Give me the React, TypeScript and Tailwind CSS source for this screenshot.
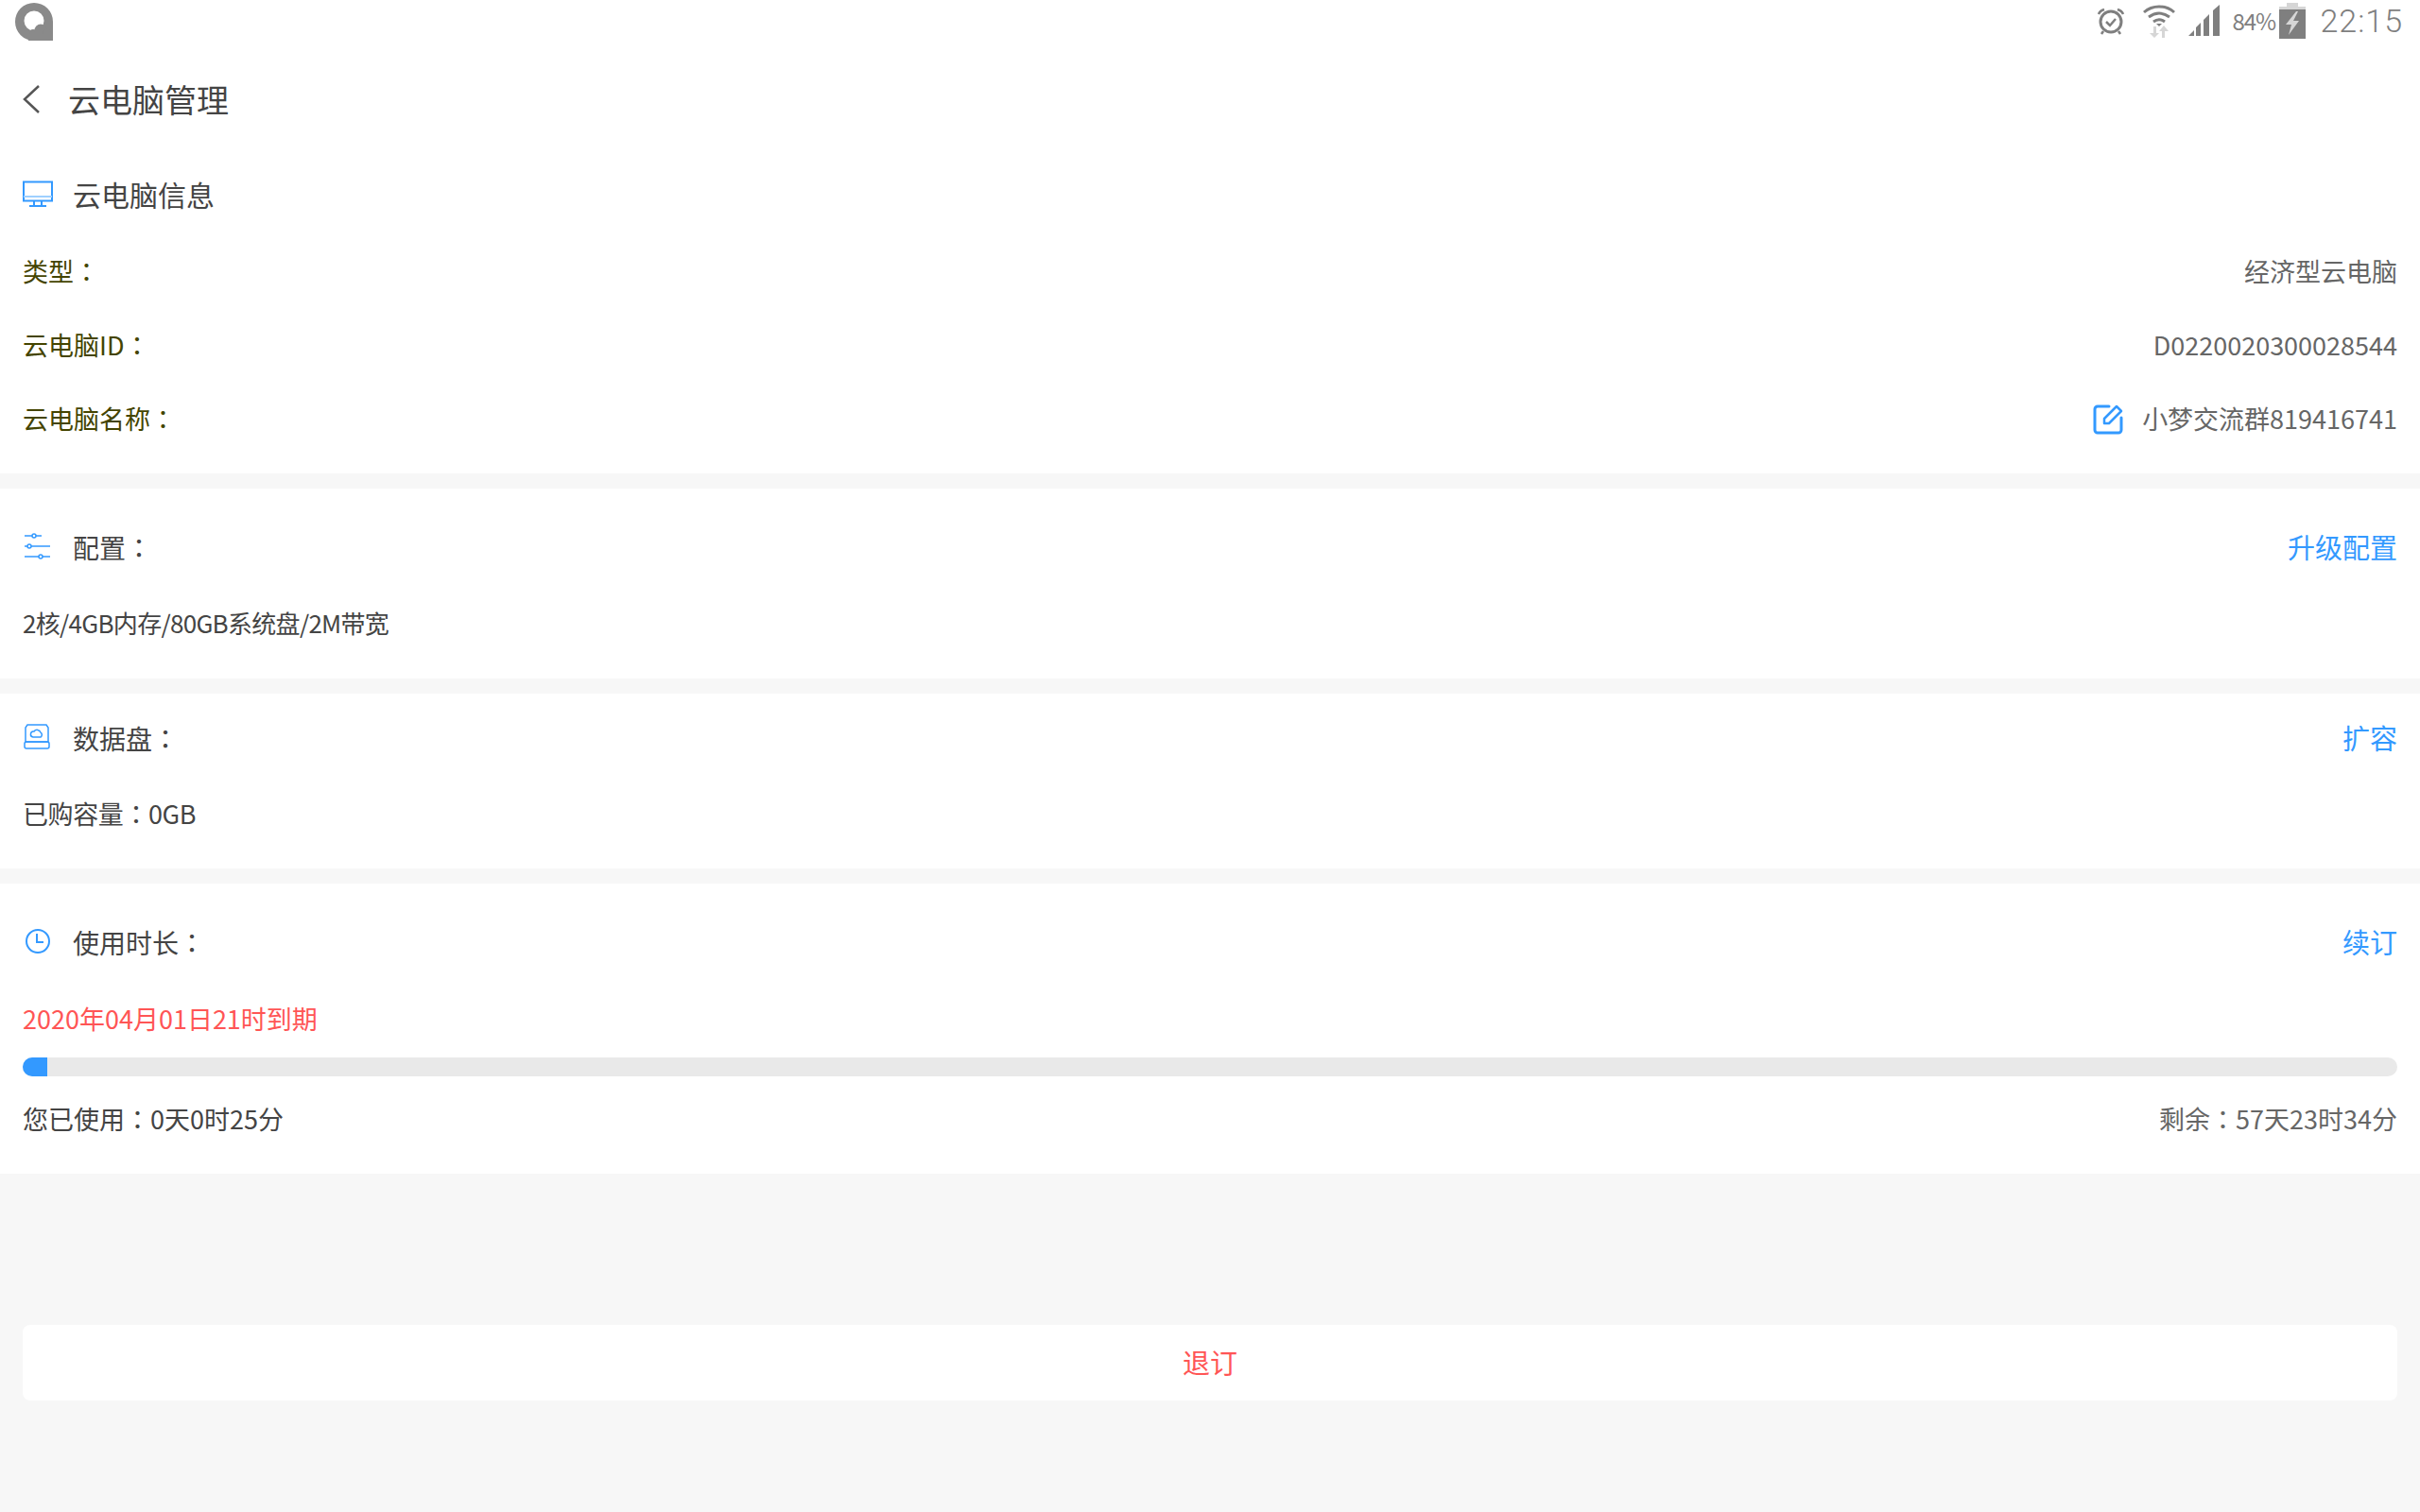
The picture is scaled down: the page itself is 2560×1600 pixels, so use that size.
import type {ReactNode} from "react";

const font = "font-['Noto_Sans_CJK_SC','Noto_Sans',sans-serif]";

// the TC cut centres the full width colon, as the reference does
function Colon() {
    return <span className="font-['Noto_Sans_CJK_TC',sans-serif]">：</span>;
}

function BlueIcon({children}: {children: ReactNode}) {
    return (
        <svg className="w-8 h-8 shrink-0" viewBox="0 0 32 32" fill="none" stroke="#3399ff" strokeWidth={2}>
            {children}
        </svg>
    );
}

function SectionHead({icon, title, action}: {icon: ReactNode, title: string, action?: string}) {
    return (
        <div className="flex items-center justify-between h-8">
            <div className="flex items-center gap-[21px]">
                {icon}
                <span className="text-[28px] text-[#444444]">{title}<Colon/></span>
            </div>
            {action && <span className="text-[29px] text-[#3399ff]">{action}</span>}
        </div>
    );
}

function StatusBar() {
    return (
        <div className="h-12 flex items-start justify-between pl-4 pr-[18px] pt-0.5">
            <svg className="w-10 h-10 mt-px" viewBox="0 0 40 40" fill="#8a8a8a">
                <path fillRule="evenodd"
                      d="M20 0a20 20 0 0 0 0 40h18a2 2 0 0 0 2-2V20A20 20 0 0 0 20 0Zm0 8.500a10.500 10.500 0 1 1 0 21 10.500 10.500 0 0 1 0-21Z"/>
                <circle cx="19" cy="32" r="4"/>
                <circle cx="27" cy="29" r="6.500"/>
                <circle cx="34" cy="33" r="5"/>
                <path d="M14 33h26v7H14Z"/>
            </svg>
            <div className="flex items-center h-10 text-[#7f7f7f]">
                <svg className="w-[30px] h-[30px] mr-[19px]" viewBox="0 0 30 30" fill="none" stroke="#7f7f7f"
                     strokeWidth={3}>
                    <circle cx="15" cy="16" r="11"/>
                    <path d="m10 16 4 4 6-7M2 8c1-3 3-4 6-5M28 8c-1-3-3-4-6-5M7 26l-2 3M23 26l2 3" strokeWidth={2.500}/>
                </svg>
                <svg className="w-[34px] h-[36px] mr-[14px]" viewBox="0 0 34 36">
                    <path d="M1 9C10 1 24 1 33 9M6 14c7-5 15-5 22 0M11 19c4-3 8-3 12 0" fill="none" stroke="#7f7f7f"
                          strokeWidth={3}/>
                    <path d="M17 24l-3-3h6Z" fill="#7f7f7f"/>
                    <path d="M11 24v7h-4l5 5 5-5h-3v-7ZM23 36v-7h4l-5-6-5 6h3v7Z" fill="#d6d6d6"/>
                </svg>
                <svg className="w-[34px] h-[34px] mr-[12px]" viewBox="0 0 34 34" fill="#7f7f7f">
                    <path d="M0 33 6 27v6ZM8 33V24l5-5v14ZM16 33V16l6-6v23ZM26 33V6l7-6v33Z"/>
                </svg>
                <span className="text-[24px] leading-none w-[48px] mr-[2px] tracking-[-1px]">84%</span>
                <svg className="w-7 h-[38px] mr-[15px]" viewBox="0 0 28 38">
                    <path d="M0 7h28v31H0Z" fill="#7f7f7f"/>
                    <path d="M8 0h12v4h8v3H0V4h8Z" fill="#d6d6d6"/>
                    <path d="M18 9 7 23h6l-3 11 11-15h-6l5-10Z" fill="#d6d6d6"/>
                </svg>
                <span className="font-['Roboto',sans-serif] text-[34px] leading-none tracking-[1px] font-light">22:15</span>
            </div>
        </div>
    );
}

function InfoRow({label, children}: {label: string, children: ReactNode}) {
    return (
        <div className="flex items-center justify-between h-[78px] pt-[3px] text-[27px]">
            <span className="text-[#444400]">{label}<Colon/></span>
            {children}
        </div>
    );
}

export default function App() {
    return (
        <div className={`w-[2560px] h-[1600px] overflow-hidden flex flex-col bg-[#f7f7f7] ${font}`}>
            <div className="bg-white">
                <StatusBar/>

                {/* Title */}
                <div className="flex items-center h-[114px] pl-6 gap-7">
                    <svg className="w-5 h-8 shrink-0" viewBox="0 0 20 32" fill="none" stroke="#555555"
                         strokeWidth={2.500}>
                        <path d="M17 2 2 16l15 14"/>
                    </svg>
                    <span className="text-[34px] pb-[2px] text-[#444444]">云电脑管理</span>
                </div>

                {/* Info */}
                <div className="px-6 pt-[29px] pb-5">
                    <div className="flex items-center gap-[21px] h-8 mb-6">
                        <svg className="w-8 h-8 shrink-0" viewBox="0 0 32 32" fill="none" stroke="#3399ff"
                             strokeWidth={2}>
                            <path d="M1 1.500h30v20H1Z"/>
                            <path d="M1 17h30" stroke="#9fd0ff"/>
                            <path d="M12 22v4M20 22v4M7 27h18"/>
                        </svg>
                        <span className="text-[30px] pb-[3px] text-[#444444]">云电脑信息</span>
                    </div>
                    <InfoRow label="类型">
                        <span className="text-[#666666]">经济型云电脑</span>
                    </InfoRow>
                    <InfoRow label="云电脑ID">
                        <span className="text-[#666666]">D0220020300028544</span>
                    </InfoRow>
                    <InfoRow label="云电脑名称">
                        <div className="flex items-center gap-5">
                            <svg className="w-8 h-8" viewBox="0 0 32 32" fill="none" stroke="#3399ff" strokeWidth={3}
                                 strokeLinecap="round" strokeLinejoin="round">
                                <path d="M17 2H5a3 3 0 0 0-3 3v22a3 3 0 0 0 3 3h22a3 3 0 0 0 3-3V14"/>
                                <path d="M12 20v-5L25 2l5 5-13 13Z" strokeWidth={2.500}/>
                            </svg>
                            <span className="text-[#666666]">小梦交流群819416741</span>
                        </div>
                    </InfoRow>
                </div>
            </div>

            {/* Config */}
            <div className="bg-white mt-4 px-6 pt-[46px] h-[201px]">
                <SectionHead
                    title="配置"
                    action="升级配置"
                    icon={
                        <BlueIcon>
                            <g strokeWidth={1.500}>
                                <path d="M2 4h8M14 4h6M2 15h3M9 15h20M2 26h15M21 26h8"/>
                                <circle cx="12" cy="4" r="2"/>
                                <circle cx="7" cy="15" r="2"/>
                                <circle cx="19" cy="26" r="2"/>
                            </g>
                        </BlueIcon>
                    }
                />
                <div className="mt-[48px] text-[26px] tracking-[-0.7px] text-[#444444] leading-8">2核/4GB内存/80GB系统盘/2M带宽</div>
            </div>

            {/* Data disk */}
            <div className="bg-white mt-4 px-6 pt-[31px] h-[185px]">
                <SectionHead
                    title="数据盘"
                    action="扩容"
                    icon={
                        <BlueIcon>
                            <g strokeWidth={1.500}>
                                <path d="M5 2h20l2 3v15H3V5Z"/>
                                <rect x="2" y="20" width="26" height="7" rx="2"/>
                                <path d="M11 15a3 3 0 0 1 1-6 4 4 0 0 1 7 1 3 3 0 0 1 0 5Z"/>
                            </g>
                        </BlueIcon>
                    }
                />
                <div className="mt-[48px] text-[27px] tracking-[-0.4px] text-[#444444] leading-8">已购容量<Colon/>0GB</div>
            </div>

            {/* Usage time */}
            <div className="bg-white mt-4 px-6 pt-[46px] h-[307px]">
                <SectionHead
                    title="使用时长"
                    action="续订"
                    icon={
                        <BlueIcon>
                            <circle cx="16" cy="15" r="12"/>
                            <path d="M15 7v9h7"/>
                        </BlueIcon>
                    }
                />
                <div className="mt-[49px] text-[27px] text-[#ff5555] leading-8">2020年04月01日21时到期</div>
                <div className="mt-[25px] h-5 rounded-full bg-[#e9e9e9] overflow-hidden">
                    <div className="h-full w-[26px] bg-[#3399ff]"/>
                </div>
                <div className="mt-[29px] flex justify-between text-[27px] leading-8">
                    <span className="text-[#444444]">您已使用<Colon/>0天0时25分</span>
                    <span className="text-[#666666]">剩余<Colon/>57天23时34分</span>
                </div>
            </div>

            <div className="mt-40 mx-6 h-20 rounded-lg bg-white flex items-center justify-center">
                <span className="text-[29px] text-[#ff5555]">退订</span>
            </div>
        </div>
    );
}
